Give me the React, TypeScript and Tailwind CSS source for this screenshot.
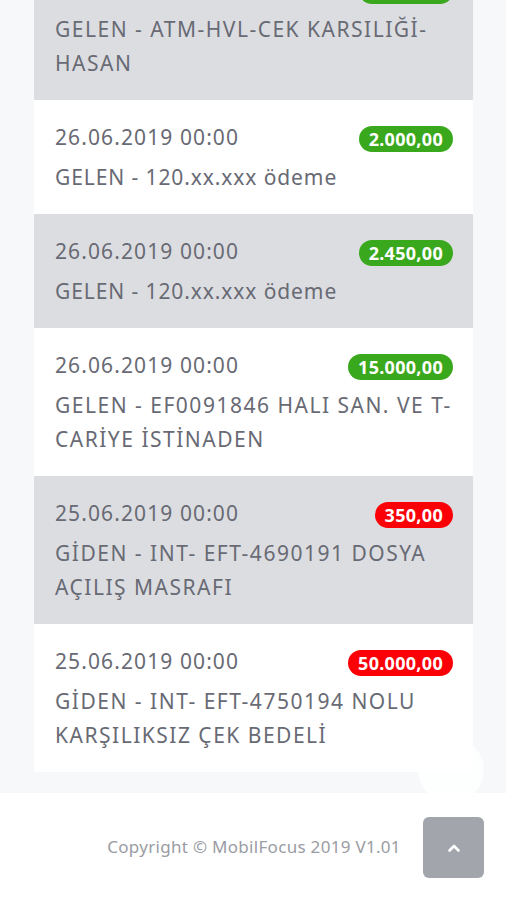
import React from "react";

type Row = { date: string; amount: string; kind: "in" | "out"; lines: string[]; gray: boolean };

const rows: Row[] = [
  { date: "26.06.2019 00:00", amount: "5.000,00", kind: "in", lines: ["GELEN - ATM-HVL-CEK KARSILIĞİ-", "HASAN"], gray: true },
  { date: "26.06.2019 00:00", amount: "2.000,00", kind: "in", lines: ["GELEN - 120.xx.xxx ödeme"], gray: false },
  { date: "26.06.2019 00:00", amount: "2.450,00", kind: "in", lines: ["GELEN - 120.xx.xxx ödeme"], gray: true },
  { date: "26.06.2019 00:00", amount: "15.000,00", kind: "in", lines: ["GELEN - EF0091846 HALI SAN. VE T-", "CARİYE İSTİNADEN"], gray: false },
  { date: "25.06.2019 00:00", amount: "350,00", kind: "out", lines: ["GİDEN - INT- EFT-4690191 DOSYA", "AÇILIŞ MASRAFI"], gray: true },
  { date: "25.06.2019 00:00", amount: "50.000,00", kind: "out", lines: ["GİDEN - INT- EFT-4750194 NOLU", "KARŞILIKSIZ ÇEK BEDELİ"], gray: false },
];

export default function App() {
  return (
    <div
      className="relative w-[506px] h-[900px] overflow-hidden bg-[#f7f8fa]"
      style={{ fontFamily: '"Noto Sans", "Open Sans", sans-serif' }}
    >
      <div className="mx-[34px] mt-[-48px] w-[439px] flex flex-col">
        {rows.map((r, i) => (
          <div
            key={i}
            className={`${r.gray ? "bg-[#dcdde1]" : "bg-white"} pl-[21px] pr-[20px] pt-[20px] pb-[20px] flex flex-col gap-[6px]`}
          >
            <div className="flex items-center justify-between h-[34px]">
              <span className="text-[21px] tracking-[1.1px] text-[#686a74] leading-[34px]">{r.date}</span>
              <span
                className={`${r.kind === "in" ? "bg-[#3aa81c]" : "bg-[#fb0007]"} text-white font-bold text-[18px] tracking-[0.3px] leading-[26px] h-[26px] px-[10px] rounded-full mt-[4px]`}
              >
                {r.amount}
              </span>
            </div>
            <div className="flex flex-col">
              {r.lines.map((l, j) => {
                const upper = l === l.toLocaleUpperCase("tr-TR");
                return (
                  <div
                    key={j}
                    className={`text-[21px] ${upper ? "tracking-[1.5px]" : "tracking-[0.9px]"} leading-[34px] text-[#686a74] whitespace-nowrap`}
                  >
                    {l}
                  </div>
                );
              })}
            </div>
          </div>
        ))}
      </div>
      <div className="h-[21px]" />
      <div className="bg-white h-[200px] flex items-start">
        <div className="w-full flex items-center justify-center h-[108px]">
          <span className="text-[17px] tracking-[0.3px] text-[#9a9ca3] ml-[2px]">Copyright © MobilFocus 2019 V1.01</span>
        </div>
      </div>
      <div className="absolute left-[418px] top-[737px] w-[66px] h-[66px] rounded-full bg-white/80" />
      <div className="absolute left-[423px] top-[817px] w-[61px] h-[61px] rounded-[6px] bg-[#a3a5ad] flex items-center justify-center">
        <svg width="16" height="16" viewBox="0 0 16 16" fill="none">
          <path d="M3.5 10.5 L8 6 L12.5 10.5" stroke="white" strokeWidth="2.6" strokeLinecap="round" strokeLinejoin="round" />
        </svg>
      </div>
    </div>
  );
}
